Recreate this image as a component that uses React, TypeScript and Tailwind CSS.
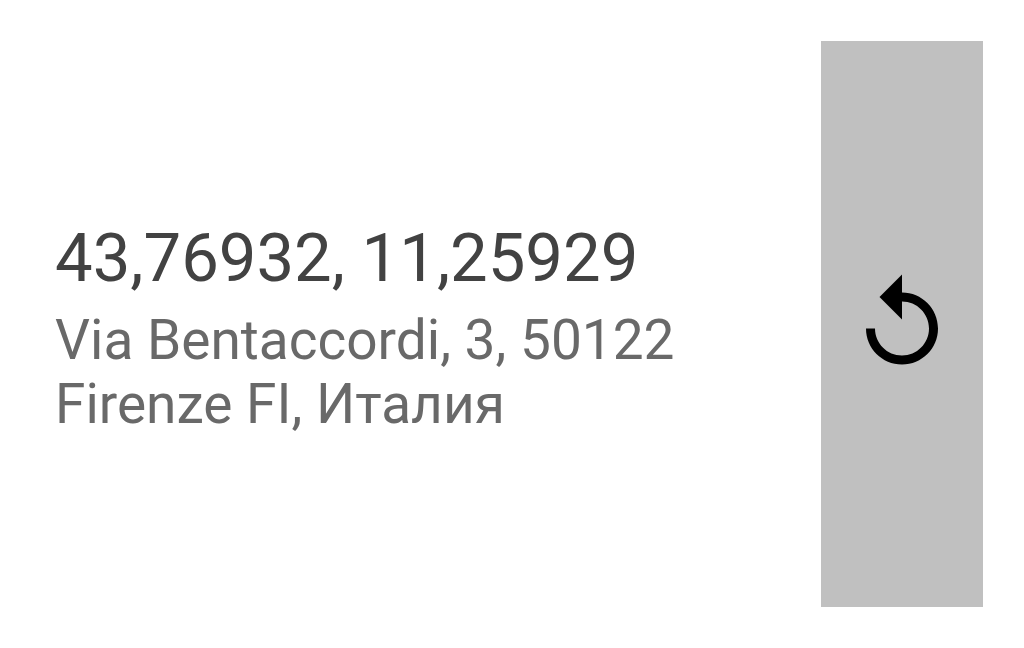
export default function App() {
  return (
    <main className="flex h-screen gap-10 bg-white py-[41px] pr-[41px] pl-[55px] font-['Roboto',sans-serif]">
      <section className="flex min-w-0 flex-1 flex-col justify-center gap-[10px] pt-[6px]">
        <h1 className="text-[67px] leading-[80px] text-[#424242]">43,76932, 11,25929</h1>
        <p className="max-w-[680px] text-[55px] leading-[64px] text-[#696969]">
          Via Bentaccordi, 3, 50122 Firenze FI, Италия
        </p>
      </section>
      <button
        type="button"
        aria-label="Reset"
        className="flex w-[162px] shrink-0 items-center justify-center bg-[#c0c0c0] text-black"
      >
        <svg viewBox="0 0 24 24" className="size-[108px]" fill="currentColor" aria-hidden="true">
          <path d="M12 5V1L7 6l5 5V7c3.31 0 6 2.69 6 6s-2.69 6-6 6-6-2.69-6-6H4c0 4.42 3.58 8 8 8s8-3.58 8-8-3.58-8-8-8z" />
        </svg>
      </button>
    </main>
  );
}
